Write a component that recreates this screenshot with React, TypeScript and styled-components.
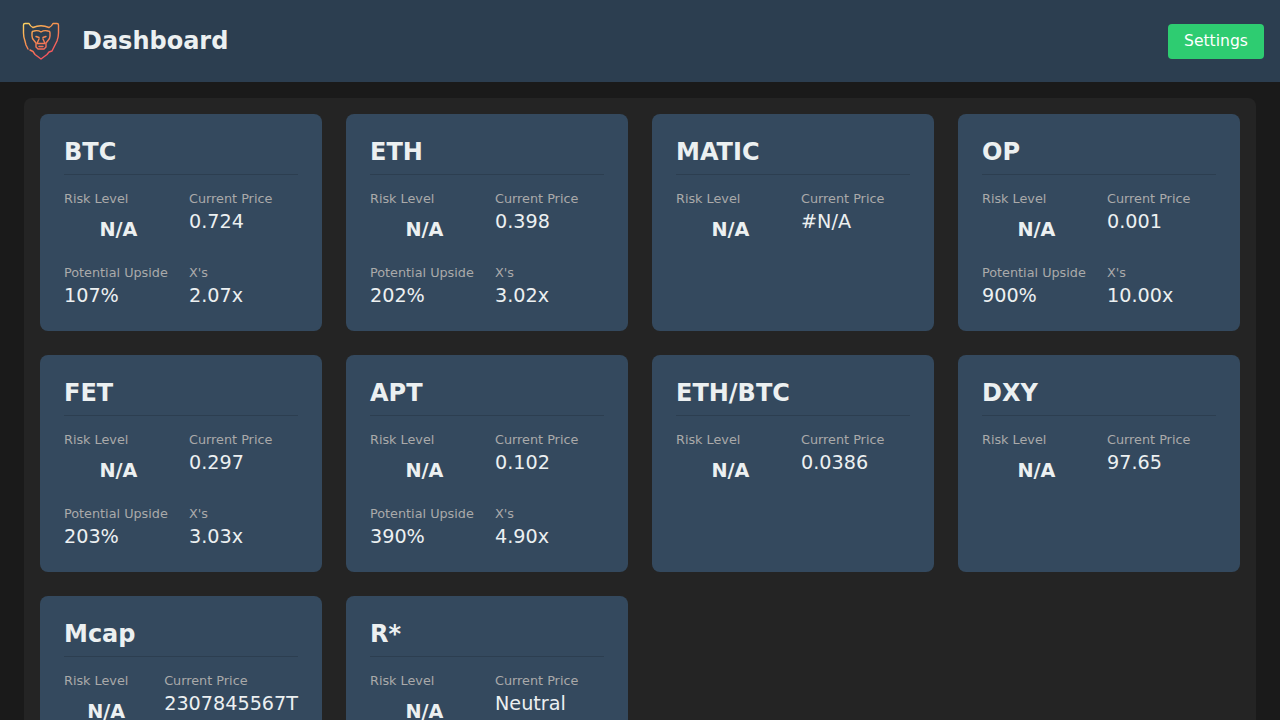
import styled, { createGlobalStyle } from 'styled-components';

const GlobalStyle = createGlobalStyle`
  * {
    box-sizing: border-box;
  }
  body {
    margin: 0;
    background-color: #1a1a1a;
    color: #ecf0f1;
    font-family: 'DejaVu Sans', sans-serif;
  }
`;

const Header = styled.header`
  display: flex;
  align-items: center;
  justify-content: space-between;
  padding: 16px;
  background-color: #2c3e50;
`;

const Brand = styled.div`
  display: flex;
  align-items: center;
  gap: 16px;
`;

const Logo = styled.svg`
  display: block;
  width: 50px;
  height: 50px;
`;

const Title = styled.h1`
  margin: 0;
  font-size: 24px;
  font-weight: bold;
`;

const SettingsButton = styled.button`
  width: 96px;
  padding: 8px 0;
  border: none;
  border-radius: 4px;
  background-color: #2ecc71;
  color: #fff;
  font-family: inherit;
  font-size: 15.6px;
  line-height: 19px;
`;

const Main = styled.main`
  padding: 16px 24px;
`;

const Panel = styled.section`
  display: grid;
  grid-template-columns: repeat(4, 1fr);
  gap: 24px;
  padding: 16px;
  border-radius: 8px;
  background-color: #242424;
`;

const Card = styled.article`
  min-height: 217px;
  padding: 24px;
  border-radius: 8px;
  background-color: #34495e;
`;

const CardTitle = styled.h2`
  margin: 0 0 16px;
  padding-bottom: 8px;
  border-bottom: 1px solid #2c3e50;
  font-size: 24px;
  font-weight: bold;
`;

const Stats = styled.div`
  display: grid;
  grid-template-columns: 1fr 1fr;
  gap: 16px;
`;

const Label = styled.div`
  margin-bottom: 4px;
  color: #aaa;
  font-size: 12.8px;
`;

const Value = styled.div`
  font-size: 19.2px;
`;

const Risk = styled.div`
  padding: 8px;
  text-align: center;
  font-size: 19.2px;
  font-weight: bold;
`;

type Asset = {
  name: string;
  price: string;
  upside?: string;
  xs?: string;
};

const assets: Asset[] = [
  { name: 'BTC', price: '0.724', upside: '107%', xs: '2.07x' },
  { name: 'ETH', price: '0.398', upside: '202%', xs: '3.02x' },
  { name: 'MATIC', price: '#N/A' },
  { name: 'OP', price: '0.001', upside: '900%', xs: '10.00x' },
  { name: 'FET', price: '0.297', upside: '203%', xs: '3.03x' },
  { name: 'APT', price: '0.102', upside: '390%', xs: '4.90x' },
  { name: 'ETH/BTC', price: '0.0386' },
  { name: 'DXY', price: '97.65' },
  { name: 'Mcap', price: '2307845567T' },
  { name: 'R*', price: 'Neutral' },
];

function LionLogo() {
  return (
    <Logo viewBox="0 0 50 50" fill="none" aria-label="Logo">
      <defs>
        <linearGradient id="lion" x1="8" y1="7" x2="30" y2="42" gradientUnits="userSpaceOnUse">
          <stop offset="0" stopColor="#fdd663" />
          <stop offset="0.4" stopColor="#f8964f" />
          <stop offset="1" stopColor="#f4505f" />
        </linearGradient>
      </defs>
      <g stroke="url(#lion)" strokeWidth="1.4" strokeLinejoin="round" strokeLinecap="round">
        <path d="M13 7.500H9Q7.500 7.500 7.500 9V17Q7.500 21 9 25L10 29 12 33M14 34L17 35.500 19 38.500 25 43 31 38.500 33 36 36 35 38 31 41 25Q42.500 21 42.500 17V9Q42.500 7.500 41 7.500H37Q35.500 10.500 33 11.500 29 9.800 25 9.800 21 9.800 17 11.500 14.500 10.500 13 7.500" />
        <path d="M18 15Q16 15 16 17V20Q16 22.500 18 24.500L20 27V31L22 33H28L30 31V27L32 24.500Q34 22.500 34 20V17Q34 15 32 15 28 14 25 16 22 14 18 15Z" />
        <path d="M20 20.500L23 21.500M30 20.500L27 21.500M23 23L21 27.500H29L27 23M23 30.500H27" />
      </g>
    </Logo>
  );
}

function AssetCard({ asset }: { asset: Asset }) {
  return (
    <Card>
      <CardTitle>{asset.name}</CardTitle>
      <Stats>
        <div>
          <Label>Risk Level</Label>
          <Risk>N/A</Risk>
        </div>
        <div>
          <Label>Current Price</Label>
          <Value>{asset.price}</Value>
        </div>
        {asset.upside && (
          <div>
            <Label>Potential Upside</Label>
            <Value>{asset.upside}</Value>
          </div>
        )}
        {asset.xs && (
          <div>
            <Label>X's</Label>
            <Value>{asset.xs}</Value>
          </div>
        )}
      </Stats>
    </Card>
  );
}

export default function App() {
  return (
    <>
      <GlobalStyle />
      <Header>
        <Brand>
          <LionLogo />
          <Title>Dashboard</Title>
        </Brand>
        <SettingsButton>Settings</SettingsButton>
      </Header>
      <Main>
        <Panel>
          {assets.map((asset) => (
            <AssetCard key={asset.name} asset={asset} />
          ))}
        </Panel>
      </Main>
    </>
  );
}
